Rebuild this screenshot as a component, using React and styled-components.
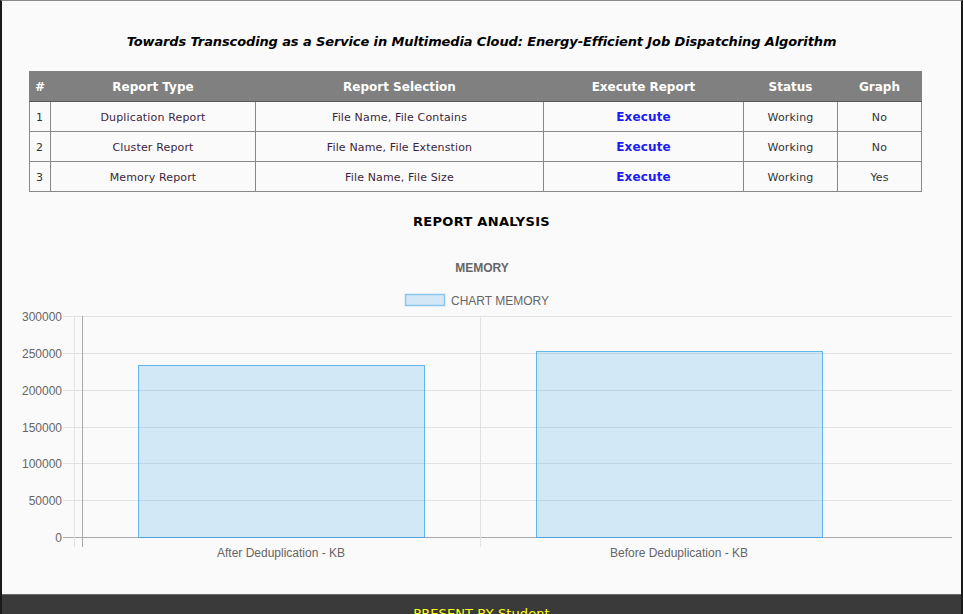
import styled, { createGlobalStyle } from "styled-components";

const GlobalStyle = createGlobalStyle`
    html, body {
        margin: 0;
        padding: 0;
        background: #fafafa;
        overflow: hidden;
    }
`;

const Page = styled.div`
    width: 963px;
    box-sizing: border-box;
    border-left: 2px solid #1a1a1a;
    border-right: 2px solid #1a1a1a;
    border-top: 1px solid #8a8a8a;
    background: #fafafa;
    font-family: "DejaVu Sans", Verdana, sans-serif;
`;

const Title = styled.h1`
    margin: 0;
    padding-top: 33px;
    font-size: 13px;
    line-height: 16px;
    font-weight: bold;
    font-style: italic;
    letter-spacing: -0.12px;
    text-align: center;
    color: #000;
`;

const ReportTable = styled.table`
    margin: 21px 0 0 27px;
    width: 892px;
    border-collapse: collapse;
    table-layout: fixed;
    border: 1px solid #333;
`;

const HeadCell = styled.th`
    background: #808080;
    color: #fff;
    font-size: 12px;
    font-weight: bold;
    height: 29px;
    padding: 0;
    text-align: center;
    border: 1px solid #808080;
    border-bottom-color: #555;
`;

const Cell = styled.td`
    height: 28px;
    padding: 1px ${(p) => (p.$left ? "6px" : "0")} 0;
    font-size: 11px;
    letter-spacing: 0.15px;
    text-align: ${(p) => (p.$left ? "left" : "center")};
    color: ${(p) => (p.$tone ? "#3e1f3c" : "#333")};
    border: 1px solid #888;
`;

const ExecuteLink = styled.a`
    color: #1b1bf2;
    font-weight: bold;
    font-size: 12px;
    text-decoration: none;
    cursor: pointer;
`;

const SectionTitle = styled.h2`
    margin: 22px 0 0;
    font-size: 13px;
    line-height: 16px;
    font-weight: bold;
    text-align: center;
    letter-spacing: 0.3px;
    color: #000;
`;

const ChartBox = styled.svg`
    display: block;
    margin-top: 20px;
    font-family: "Liberation Sans", Arial, sans-serif;
`;

const Footer = styled.footer`
    border-top: 1px solid #6a6a6a;
    background: #3a3a3a;
    height: 60px;
    padding-top: 11px;
    text-align: center;
    color: #ffff1a;
    font-size: 13px;
    line-height: 16px;
    letter-spacing: 0.1px;
`;

const columns = [
    { label: "#", width: 21 },
    { label: "Report Type", width: 205 },
    { label: "Report Selection", width: 288 },
    { label: "Execute Report", width: 200 },
    { label: "Status", width: 94 },
    { label: "Graph", width: 84 },
];

const reports = [
    { id: 1, type: "Duplication Report", selection: "File Name, File Contains", status: "Working", graph: "No" },
    { id: 2, type: "Cluster Report", selection: "File Name, File Extenstion", status: "Working", graph: "No" },
    { id: 3, type: "Memory Report", selection: "File Name, File Size", status: "Working", graph: "Yes" },
];

const bars = [
    { label: "After Deduplication - KB", value: 233500, x: 138, center: 281 },
    { label: "Before Deduplication - KB", value: 252500, x: 536, center: 679 },
];

const ticks = [300000, 250000, 200000, 150000, 100000, 50000, 0];
const zeroY = 537;
const topY = 316;
const toY = (v) => zeroY - ((zeroY - topY) * v) / 300000;

const MemoryChart = () => (
    <ChartBox width="959" height="344" viewBox="2 250 959 344">
        <text x="482" y="272" textAnchor="middle" fontSize="12" fontWeight="bold" fill="#666">MEMORY</text>
        <rect x="405.5" y="294.5" width="39" height="11" fill="#d3e7f6" stroke="#8cc6ef" strokeWidth="1.5" />
        <text x="451" y="305" fontSize="12" fill="#666">CHART MEMORY</text>

        {ticks.map((t) => {
            const y = Math.round(toY(t)) + 0.5;
            return (
                <g key={t}>
                    <line x1="63" x2="952" y1={y} y2={y} stroke={t === 0 ? "#a8a8a8" : "#e2e2e2"} />
                    <text x="62" y={y + 4} textAnchor="end" fontSize="12" fill="#666">{t}</text>
                </g>
            );
        })}
        <line x1="74.5" x2="74.5" y1="316" y2="547" stroke="#e2e2e2" />
        <line x1="480.5" x2="480.5" y1="316" y2="547" stroke="#e2e2e2" />
        <line x1="82.5" x2="82.5" y1="316" y2="547" stroke="#a8a8a8" />

        {bars.map((b) => {
            const top = Math.round(toY(b.value));
            return (
                <g key={b.label}>
                    <rect x={b.x + 0.5} y={top + 0.5} width="286" height={zeroY - top} fill="rgba(54,162,235,0.2)" stroke="rgba(54,162,235,0.75)" />
                    <text x={b.center} y="557" textAnchor="middle" fontSize="12" fill="#666">{b.label}</text>
                </g>
            );
        })}
    </ChartBox>
);

const App = () => (
    <>
        <GlobalStyle />
        <Page>
            <Title>Towards Transcoding as a Service in Multimedia Cloud: Energy-Efficient Job Dispatching Algorithm</Title>
            <ReportTable>
                <colgroup>
                    {columns.map((c) => (
                        <col key={c.label} style={{ width: c.width }} />
                    ))}
                </colgroup>
                <thead>
                    <tr>
                        {columns.map((c) => (
                            <HeadCell key={c.label}>{c.label}</HeadCell>
                        ))}
                    </tr>
                </thead>
                <tbody>
                    {reports.map((r) => (
                        <tr key={r.id}>
                            <Cell $left>{r.id}</Cell>
                            <Cell $tone>{r.type}</Cell>
                            <Cell $tone>{r.selection}</Cell>
                            <Cell>
                                <ExecuteLink>Execute</ExecuteLink>
                            </Cell>
                            <Cell>{r.status}</Cell>
                            <Cell>{r.graph}</Cell>
                        </tr>
                    ))}
                </tbody>
            </ReportTable>
            <SectionTitle>REPORT ANALYSIS</SectionTitle>
            <MemoryChart />
            <Footer>PRESENT BY Student</Footer>
        </Page>
    </>
);

export default App;
